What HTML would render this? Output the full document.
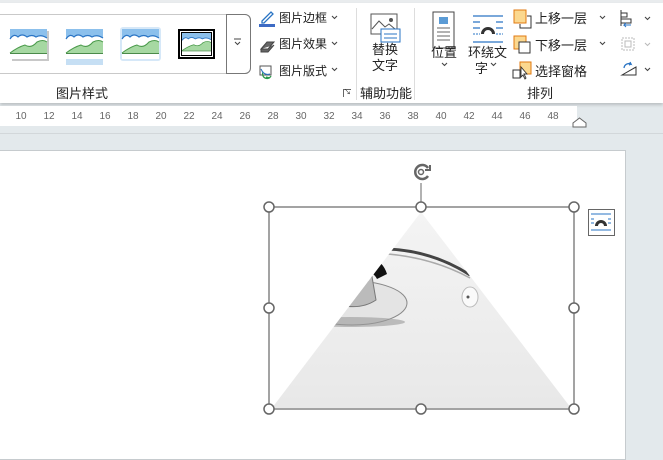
<!DOCTYPE html>
<html><head><meta charset="utf-8"><style>
*{margin:0;padding:0;box-sizing:border-box}
body{width:663px;height:451px;overflow:hidden;background:#e3e9ec;font-family:"Liberation Sans","Noto Sans CJK SC",sans-serif;position:relative;color:#222}
.a{position:absolute;white-space:nowrap}
.t{font-size:13px}
.s{font-size:12px}
.r{font-size:10px;color:#666;position:absolute;top:111px;transform:translateX(-50%)}
</style></head><body>
<div class="a" style="left:0;top:0;width:663px;height:3px;background:#e9ecee"></div>
<div class="a" style="left:0;top:3px;width:663px;height:100px;background:#fff;box-shadow:0 2px 3px rgba(0,0,0,.18)"></div>
<div class="a" style="left:-5px;top:14px;width:256px;height:60px;border:1px solid #c9c9c9;border-radius:0 6px 6px 0"></div>
<div class="a" style="left:226px;top:14px;width:25px;height:60px;border:1px solid #777;border-radius:0 6px 6px 0;background:#fff"></div>
<svg class="a" style="left:233px;top:38px" width="10" height="8"><path d="M1 1h7M2 4l2.5 2.5L7 4" stroke="#444" fill="none"/></svg>
<svg class="a" style="left:0;top:0" width="260" height="70">
<defs><g id="pic"><rect width="37" height="30" fill="#8cc0ec"/><path d="M0 10 q4-6 8-2 q4-4 9 0 q5-3 9 0 q5-3 11 1 v21 h-37z" fill="#fff"/><path d="M0 10 q4-6 8-2 q4-4 9 0 q5-3 9 0 q5-3 11 1" stroke="#2a74c4" fill="none" stroke-width="1.2"/><path d="M0 24 q8-6 15-8 q6 4 12-3 q6-3 10 0 v11 h-37z" fill="#a6d8a2"/><path d="M0 24 q8-6 15-8 q6 4 12-3 q6-3 10 0" stroke="#4a9a4a" fill="none"/><rect y="24" width="37" height="1" fill="#4a8a4a"/></g></defs>
<rect x="12" y="31" width="37" height="30" fill="#c8c8c8"/><use href="#pic" x="10" y="29"/>
<rect x="66" y="59" width="37" height="6" fill="#c6dff4"/><use href="#pic" x="66" y="29"/>
<rect x="120" y="27" width="41" height="34" rx="3" fill="#d6e8f8"/><use href="#pic" x="122" y="29"/>
<rect x="178" y="29" width="37" height="30" fill="#000"/><rect x="180" y="31" width="33" height="26" fill="#fff"/><rect x="181" y="32" width="31" height="24" fill="#000"/>
<svg x="182" y="33" width="29" height="22" viewBox="0 0 37 30" preserveAspectRatio="none"><use href="#pic"/></svg>
</svg>
<svg class="a" style="left:258px;top:9px" width="20" height="72">
<path d="M4 12 l9-9 2 2 -9 9h-2z" fill="none" stroke="#2a74c4" stroke-width="1.3"/><rect x="1" y="15" width="16" height="3" fill="#3d6bc4"/>
<path d="M3 40 l6-7 h7 l-6 7z M3 40 v3 h7 l6-7" fill="#666" stroke="#444"/>
<rect x="2" y="57" width="11" height="9" fill="none" stroke="#555"/><path d="M5 63 a4 4 0 0 0 8 4 M8 68 l4 1" stroke="#2a9a4a" fill="none" stroke-width="1.3"/><path d="M3 60 q3 7 9 5" stroke="#2a74c4" fill="none"/>
</svg>
<div class="a s" style="left:279px;top:9px">图片边框</div>
<div class="a s" style="left:279px;top:35px">图片效果</div>
<div class="a s" style="left:279px;top:62px">图片版式</div>
<svg class="a" style="left:0;top:0" width="663" height="80"><g stroke="#444" fill="none" stroke-width="1.1">
<path d="M332 16l2.5 2.5L337 16M332 42l2.5 2.5L337 42M332 68l2.5 2.5L337 68"/>
<path d="M442 63l2.5 2.5L447 63M491 63l2.5 2.5L496 63"/>
<path d="M600 16l2.5 2.5L605 16M600 42l2.5 2.5L605 42"/>
<path d="M645 17l2.5 2.5L650 17M645 68l2.5 2.5L650 68"/>
<path d="M645 43l2.5 2.5L650 43" stroke="#bbb"/></g></svg>
<div class="a t" style="left:56px;top:83px">图片样式</div>
<div class="a" style="left:343px;top:89px;width:8px;height:8px;border-left:1px solid #666;border-top:1px solid #666;font-size:7px;line-height:6px;text-align:right">↘</div>
<div class="a" style="left:356px;top:8px;width:1px;height:92px;background:#ddd"></div>
<div class="a" style="left:414px;top:8px;width:1px;height:92px;background:#ddd"></div>
<svg class="a" style="left:370px;top:13px" width="32" height="34"><rect x="1" y="1" width="26" height="20" fill="#fff" stroke="#555"/><path d="M2 16 l7-8 6 6 4-3 6 5" fill="none" stroke="#555"/><circle cx="21" cy="7" r="2" fill="#555"/><rect x="11" y="16" width="19" height="13" fill="#fff" stroke="#2a74c4"/><path d="M14 21h13M14 25h13" stroke="#2a74c4"/></svg>
<div class="a t" style="left:372px;top:42px;line-height:16px">替换<br>文字</div>
<div class="a t" style="left:360px;top:83px">辅助功能</div>
<svg class="a" style="left:432px;top:11px" width="26" height="40"><rect x="1" y="1" width="21" height="36" fill="#fff" stroke="#444"/><rect x="7" y="6" width="9" height="7" fill="#5b9bd5"/><path d="M5 17h13M5 21h13M5 25h13M5 29h13" stroke="#666"/></svg>
<div class="a t" style="left:431px;top:42px">位置</div>
<svg class="a" style="left:471px;top:14px" width="34" height="32"><path d="M2 2h30M2 8h7M25 8h7M2 14h7M25 14h7M2 28h30" stroke="#2a74c4" stroke-width="1.3"/><path d="M10 20 a7 7 0 0 1 14 0 h-3 a4 4 0 0 0-8 0z" fill="#333"/><path d="M2 20h7M25 20h7" stroke="#2a74c4" stroke-dasharray="2 1"/></svg>
<div class="a t" style="left:468px;top:42px">环绕文</div>
<div class="a t" style="left:475px;top:58px">字</div>
<svg class="a" style="left:512px;top:8px" width="22" height="72"><rect x="2" y="2" width="12" height="13" fill="#fbd88f" stroke="#e07a10"/><path d="M15 8h4v12h-11v-4" fill="none" stroke="#333"/>
<rect x="2" y="28" width="12" height="13" fill="#fbd88f" stroke="#e07a10"/><rect x="7" y="34" width="11" height="11" fill="#fff" stroke="#333"/>
<rect x="8" y="54" width="11" height="12" fill="#fbd88f" stroke="#e07a10"/><path d="M1 62h7v8h-7z" fill="#fff" stroke="#333"/><path d="M9 59 l0 10 2-2 2 4 1-1-2-4h3z" fill="#fff" stroke="#333" stroke-width=".9"/></svg>
<div class="a t" style="left:535px;top:8px">上移一层</div>
<div class="a t" style="left:535px;top:35px">下移一层</div>
<div class="a t" style="left:535px;top:61px">选择窗格</div>
<svg class="a" style="left:619px;top:8px" width="24" height="72"><path d="M2 2v16M2 5h6v4h-6M2 11h10v4h-10" fill="none" stroke="#333"/><path d="M12 17h-7l2-2M5 17l2 2" stroke="#2a74c4" fill="none"/>
<rect x="3" y="30" width="12" height="12" fill="none" stroke="#bbb" stroke-dasharray="2 1"/><rect x="6" y="33" width="6" height="6" fill="none" stroke="#bbb"/>
<path d="M3 67 l14-8 v8z" fill="none" stroke="#333"/><path d="M5 60 a5 5 0 0 1 7-4 l-1-2 M12 56 l-2 1" stroke="#2a74c4" fill="none" stroke-width="1.3"/></svg>
<div class="a t" style="left:527px;top:83px">排列</div>
<div class="a" style="left:0;top:106px;width:577px;height:20px;background:#fff"></div>
<span class="r" style="left:21px">10</span><span class="r" style="left:49px">12</span><span class="r" style="left:77px">14</span><span class="r" style="left:105px">16</span><span class="r" style="left:133px">18</span><span class="r" style="left:161px">20</span><span class="r" style="left:189px">22</span><span class="r" style="left:217px">24</span><span class="r" style="left:245px">26</span><span class="r" style="left:273px">28</span><span class="r" style="left:301px">30</span><span class="r" style="left:329px">32</span><span class="r" style="left:357px">34</span><span class="r" style="left:385px">36</span><span class="r" style="left:413px">38</span><span class="r" style="left:441px">40</span><span class="r" style="left:469px">42</span><span class="r" style="left:497px">44</span><span class="r" style="left:525px">46</span><span class="r" style="left:553px">48</span>
<svg class="a" style="left:572px;top:116px" width="16" height="12"><path d="M1 11h13v-4l-6.5-5-6.5 5z" fill="#fff" stroke="#666"/></svg>
<div class="a" style="left:0;top:133px;width:663px;height:1px;background:#d2d7da"></div>
<div class="a" style="left:-2px;top:150px;width:628px;height:310px;background:#fff;border:1px solid #c6cbce"></div>
<svg class="a" style="left:0;top:0" width="663" height="451">
<defs><linearGradient id="g" x1="0" y1="0" x2="0" y2="1"><stop offset="0" stop-color="#f4f4f4"/><stop offset="1" stop-color="#e8e8e8"/></linearGradient></defs>
<path d="M421 212 L571 408 L272 408Z" fill="url(#g)"/>
<clipPath id="c"><path d="M421 212 L571 408 L272 408Z"/></clipPath>
<g clip-path="url(#c)">
<path d="M388 249 q45 2 82 26" stroke="#444" stroke-width="3" fill="none"/><path d="M388 254 q45 4 82 24" stroke="#aaa" stroke-width="1.5" fill="none"/>
<ellipse cx="352" cy="303" rx="55" ry="22" fill="#e4e4e4" stroke="#888"/>
<path d="M340 305 q8-30 30-40 l6 35 q-15 10-36 5z" fill="#bbb" stroke="#777"/>
<path d="M355 262 q25-10 32 12 l-10 5 q-5-10-22-8z" fill="#111"/>
<path d="M335 290 l15 5 -4 8 -15-4z" fill="#222"/>
<ellipse cx="350" cy="322" rx="55" ry="5" fill="#999" opacity=".6"/>
<ellipse cx="470" cy="297" rx="8" ry="10" fill="#fafafa" stroke="#bbb"/><circle cx="468" cy="297" r="1.5" fill="#555"/>
</g>
<rect x="269" y="207" width="305" height="202" fill="none" stroke="#666" stroke-width="1.2"/>
<line x1="421" y1="183" x2="421" y2="207" stroke="#666"/>
<g fill="#fff" stroke="#666" stroke-width="1.5"><circle cx="269" cy="207" r="5"/><circle cx="421" cy="207" r="5"/><circle cx="574" cy="207" r="5"/><circle cx="269" cy="308" r="5"/><circle cx="574" cy="308" r="5"/><circle cx="269" cy="409" r="5"/><circle cx="421" cy="409" r="5"/><circle cx="574" cy="409" r="5"/></g>
<path d="M428 176 a7 7 0 1 1 0-8" fill="none" stroke="#666" stroke-width="2.5"/><circle cx="421" cy="172" r="2.5" fill="none" stroke="#666" stroke-width="1.5"/><path d="M425 170 l5 0 0-5" fill="none" stroke="#666" stroke-width="2"/>
<rect x="588.5" y="209.5" width="26" height="26" fill="#fff" stroke="#666"/>
<path d="M591 214h20M591 219h3M608 219h3M591 223h3M608 223h3M591 230h20" stroke="#2a74c4"/><path d="M595 226 a6 6 0 0 1 12 0 h-3 a3 3 0 0 0-6 0z" fill="#333"/>
</svg>
</body></html>
